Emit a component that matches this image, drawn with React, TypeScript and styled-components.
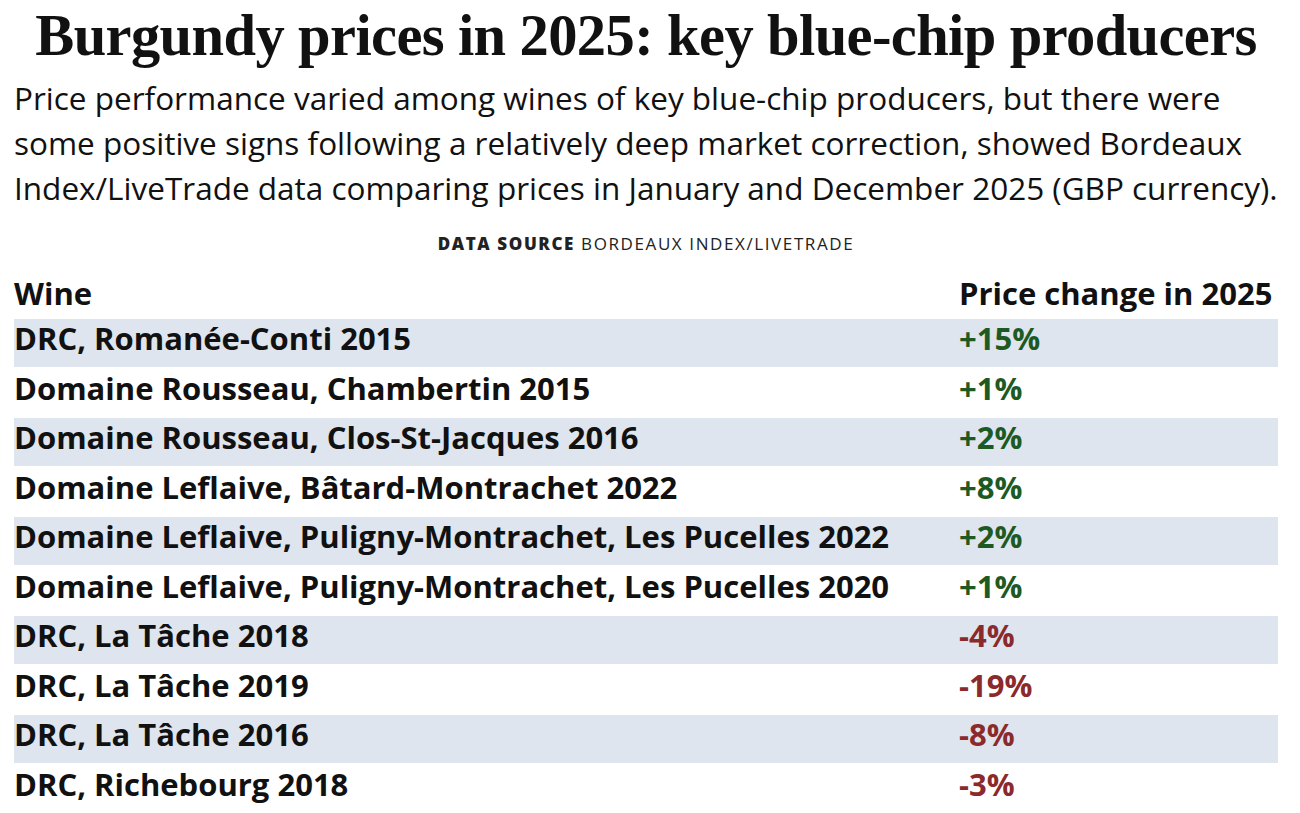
import React from "react";
import styled, { createGlobalStyle } from "styled-components";

const Global = createGlobalStyle`
  html, body { margin: 0; padding: 0; background: #ffffff; }
  body { font-family: "Open Sans", "Noto Sans", sans-serif; color: #111; }
`;

const Page = styled.div`
  width: 1264px;
  padding: 0 22px 0 14px;
  display: flex;
  flex-direction: column;
`;

const Title = styled.h1`
  margin: 0;
  font-family: "Liberation Serif", "Times New Roman", serif;
  font-weight: 700;
  font-size: 58.5px;
  line-height: 72px;
  letter-spacing: -0.6px;
  text-align: center;
  color: #111;
`;

const Subtitle = styled.p`
  margin: 3px 0 0;
  font-family: "Open Sans", sans-serif;
  font-weight: 400;
  font-size: 31.5px;
  line-height: 45px;
  color: #111;
`;

const Source = styled.div`
  margin-top: 22px;
  font-family: "Open Sans", sans-serif;
  font-size: 17px;
  line-height: 24px;
  letter-spacing: 1.6px;
  text-align: center;
  text-transform: uppercase;
  color: #222;
  b { font-weight: 800; }
`;

const Table = styled.div`
  margin-top: 18px;
  display: flex;
  flex-direction: column;
`;

const Row = styled.div<{ $shade?: boolean; $head?: boolean }>`
  display: grid;
  grid-template-columns: 945px 1fr;
  align-items: start;
  height: ${(p) => (p.$head ? "45px" : "47.5px")};
  margin-bottom: ${(p) => (p.$head ? "0" : "2px")};
  background: ${(p) => (p.$shade ? "#dfe5ee" : "transparent")};
`;

const Cell = styled.div<{ $tone?: "up" | "down" }>`
  padding-top: 4px;
  font-family: "Open Sans", sans-serif;
  font-weight: 700;
  font-size: 31px;
  line-height: 31px;
  white-space: nowrap;
  color: ${(p) =>
    p.$tone === "up" ? "#1d5a23" : p.$tone === "down" ? "#8a2a2c" : "#111"};
`;

const rows: [string, string][] = [
  ["DRC, Romanée-Conti 2015", "+15%"],
  ["Domaine Rousseau, Chambertin 2015", "+1%"],
  ["Domaine Rousseau, Clos-St-Jacques 2016", "+2%"],
  ["Domaine Leflaive, Bâtard-Montrachet 2022", "+8%"],
  ["Domaine Leflaive, Puligny-Montrachet, Les Pucelles 2022", "+2%"],
  ["Domaine Leflaive, Puligny-Montrachet, Les Pucelles 2020", "+1%"],
  ["DRC, La Tâche 2018", "-4%"],
  ["DRC, La Tâche 2019", "-19%"],
  ["DRC, La Tâche 2016", "-8%"],
  ["DRC, Richebourg 2018", "-3%"],
];

export default function App() {
  return (
    <Page>
      <Global />
      <Title>Burgundy prices in 2025: key blue-chip producers</Title>
      <Subtitle>
        Price performance varied among wines of key blue-chip producers, but there were
        <br />
        some positive signs following a relatively deep market correction, showed Bordeaux
        <br />
        Index/LiveTrade data comparing prices in January and December 2025 (GBP currency).
      </Subtitle>
      <Source>
        <b>Data source</b> Bordeaux Index/LiveTrade
      </Source>
      <Table>
        <Row $head>
          <Cell>Wine</Cell>
          <Cell>Price change in 2025</Cell>
        </Row>
        {rows.map(([w, v], i) => (
          <Row key={w} $shade={i % 2 === 0}>
            <Cell>{w}</Cell>
            <Cell $tone={v.startsWith("+") ? "up" : "down"}>{v}</Cell>
          </Row>
        ))}
      </Table>
    </Page>
  );
}
